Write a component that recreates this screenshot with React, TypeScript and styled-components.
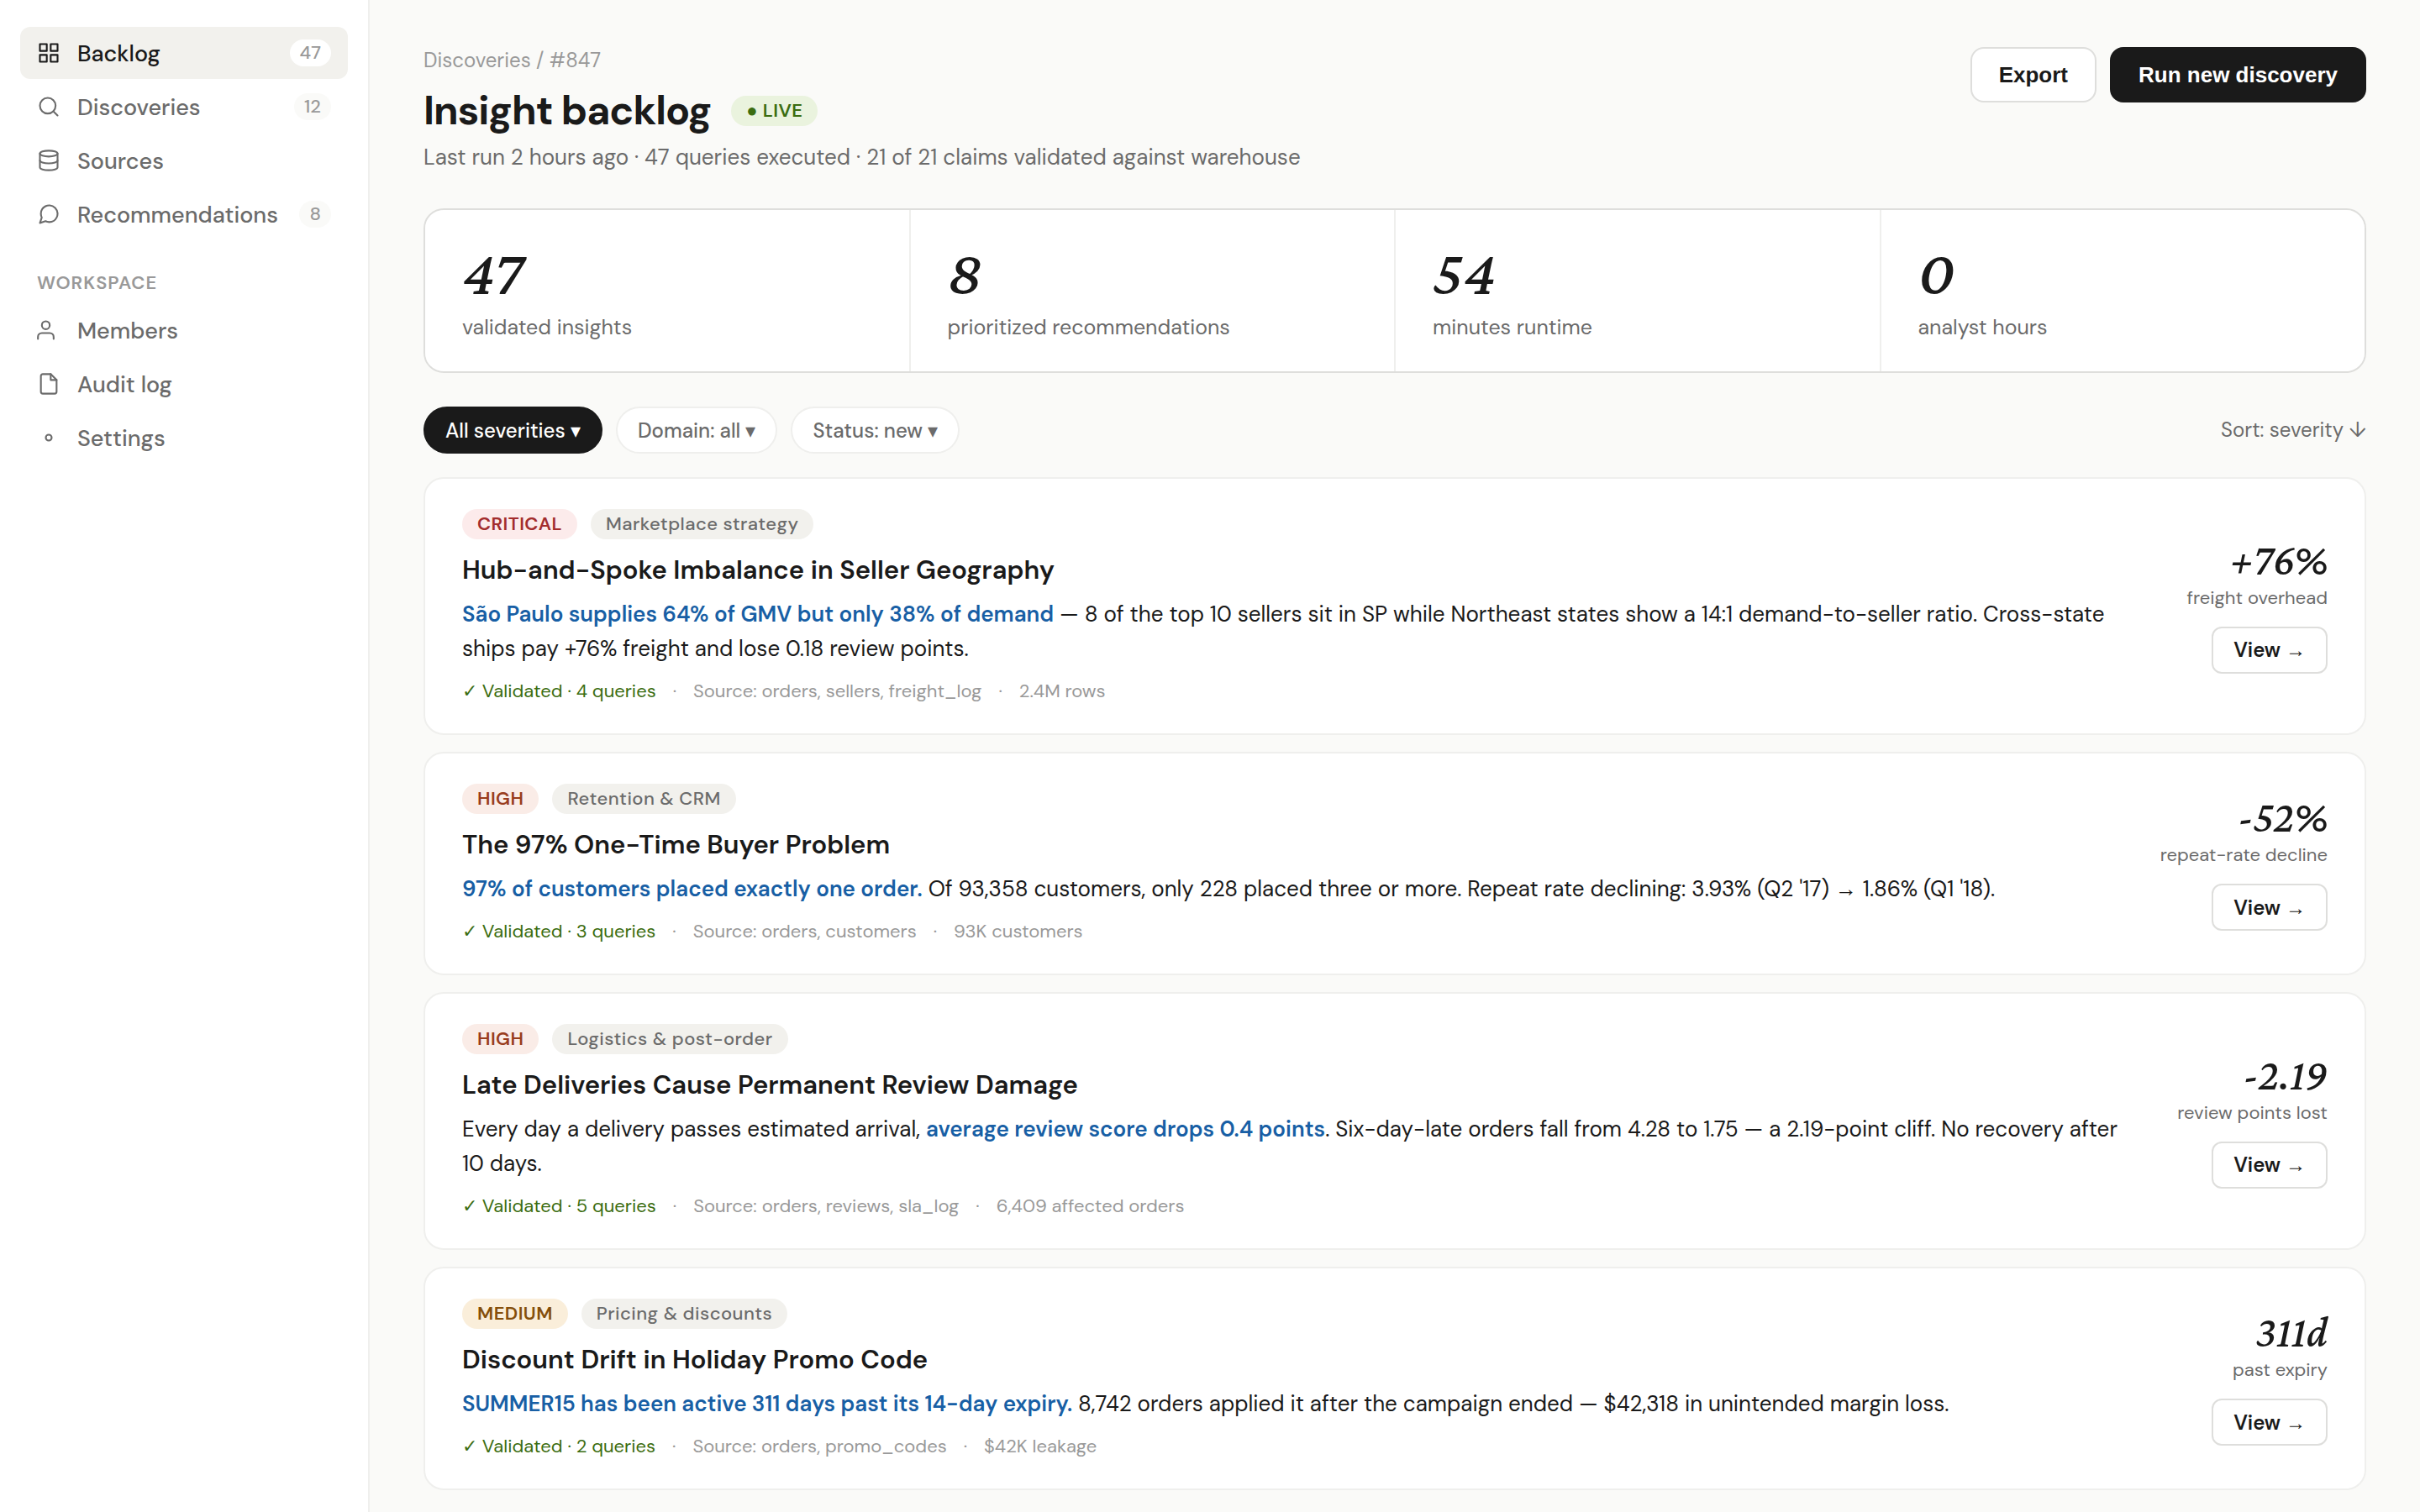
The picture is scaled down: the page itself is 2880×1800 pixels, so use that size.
import React from "react";
import styled, { createGlobalStyle } from "styled-components";

const sans = `"DM Sans", "Liberation Sans", sans-serif`;
const serif = `"Crimson Pro", "Liberation Serif", serif`;

const color = {
  page: "#fafaf8",
  surface: "#ffffff",
  muted: "#f2f1ed",
  ink: "#1a1a1a",
  text: "#6b6b6b",
  faint: "#999999",
  line: "#efefed",
  lineStrong: "#dededc",
  link: "#185fa5",
  green: "#3b6d11",
};

const GlobalStyle = createGlobalStyle`
  *, *::before, *::after { box-sizing: border-box; }
  body {
    margin: 0;
    background: ${color.page};
    color: ${color.ink};
    font-family: ${sans};
    font-size: 26px;
  }
  h1, h2, p, ul, dl, dd { margin: 0; padding: 0; }
  a { color: inherit; text-decoration: none; }
`;

const Shell = styled.div`
  display: flex;
  min-height: 100vh;
`;

const Sidebar = styled.nav`
  flex: none;
  width: 440px;
  padding: 32px 24px;
  background: ${color.surface};
  border-right: 2px solid ${color.line};
`;

const NavList = styled.ul`
  display: flex;
  flex-direction: column;
  gap: 2px;
  list-style: none;
`;

const NavLink = styled.a<{ $active?: boolean }>`
  display: flex;
  align-items: center;
  gap: 20px;
  height: 62px;
  padding: 0 20px;
  border-radius: 12px;
  font-size: 27px;
  font-weight: 500;
  color: ${(p) => (p.$active ? color.ink : color.text)};
  background: ${(p) => (p.$active ? color.muted : "transparent")};

  svg {
    flex: none;
    width: 28px;
    height: 28px;
  }
`;

const Count = styled.span<{ $active?: boolean }>`
  margin-left: auto;
  padding: 0 12px;
  border-radius: 16px;
  font-size: 22px;
  line-height: 32px;
  color: ${color.faint};
  background: ${(p) => (p.$active ? color.surface : color.page)};
`;

const NavHeading = styled.h2`
  padding: 37px 20px 11px;
  font-size: 22px;
  font-weight: 600;
  line-height: 28px;
  letter-spacing: 1px;
  color: ${color.faint};
`;

const Main = styled.main`
  flex: 1;
  min-width: 0;
  padding: 56px 64px 26px;
`;

const Header = styled.header`
  display: flex;
  justify-content: space-between;
  align-items: flex-start;
  margin-bottom: 44px;
`;

const Breadcrumb = styled.p`
  margin-bottom: 12px;
  font-size: 24px;
  line-height: 32px;
  color: ${color.faint};
`;

const TitleRow = styled.div`
  display: flex;
  align-items: center;
  gap: 24px;
  margin-bottom: 6px;
`;

const Title = styled.h1`
  font-size: 48px;
  font-weight: 700;
  line-height: 64px;
  letter-spacing: -1px;
`;

const Subtitle = styled.p`
  font-size: 26px;
  line-height: 34px;
  color: ${color.text};
`;

const Actions = styled.div`
  display: flex;
  gap: 16px;
`;

const ActionButton = styled.button<{ $primary?: boolean }>`
  padding: 16px 32px;
  border: 2px solid ${(p) => (p.$primary ? color.ink : color.lineStrong)};
  border-radius: 16px;
  font-family: "Liberation Sans", Arial, sans-serif;
  font-size: 26px;
  font-weight: 600;
  line-height: 30px;
  color: ${(p) => (p.$primary ? "#ffffff" : color.ink)};
  background: ${(p) => (p.$primary ? color.ink : color.surface)};
`;

type Tone = "live" | "critical" | "high" | "medium" | "neutral";

const tones: Record<Tone, { bg: string; fg: string }> = {
  live: { bg: "#eaf3de", fg: color.green },
  critical: { bg: "#fcebeb", fg: "#a32d2d" },
  high: { bg: "#faece7", fg: "#993c1d" },
  medium: { bg: "#faeeda", fg: "#854f0b" },
  neutral: { bg: color.muted, fg: color.text },
};

const Tag = styled.span<{ $tone: Tone }>`
  padding: 0 18px;
  border-radius: 18px;
  font-size: 22px;
  font-weight: ${(p) => (p.$tone === "neutral" ? 500 : 600)};
  line-height: 36px;
  letter-spacing: 0.02em;
  white-space: nowrap;
  color: ${(p) => tones[p.$tone].fg};
  background: ${(p) => tones[p.$tone].bg};
`;

const Stats = styled.dl`
  display: grid;
  grid-template-columns: repeat(4, 1fr);
  gap: 2px;
  margin-bottom: 40px;
  border: 2px solid ${color.lineStrong};
  border-radius: 24px;
  overflow: hidden;
  background: ${color.line};
`;

const Stat = styled.div`
  display: flex;
  flex-direction: column-reverse;
  gap: 16px;
  padding: 40px 44px 36px;
  background: ${color.surface};
`;

const StatValue = styled.dd`
  font-family: ${serif};
  font-size: 76px;
  font-style: italic;
  font-weight: 500;
  line-height: 68px;
`;

const StatLabel = styled.dt`
  font-size: 25px;
  line-height: 32px;
  color: ${color.text};
`;

const Toolbar = styled.div`
  display: flex;
  align-items: center;
  gap: 16px;
  margin-bottom: 28px;
`;

const Filter = styled.select<{ $active?: boolean }>`
  appearance: none;
  field-sizing: content;
  height: 56px;
  padding: 0 24px;
  border: 2px solid ${(p) => (p.$active ? color.ink : color.line)};
  border-radius: 28px;
  font-family: ${sans};
  font-size: 24px;
  font-weight: 500;
  color: ${(p) => (p.$active ? "#ffffff" : color.text)};
  background: ${(p) => (p.$active ? color.ink : color.surface)};
`;

const SortButton = styled.button`
  margin-left: auto;
  padding: 0;
  border: 0;
  background: none;
  font-family: ${sans};
  font-size: 24px;
  line-height: 32px;
  color: ${color.text};
`;

const CardList = styled.div`
  display: flex;
  flex-direction: column;
  gap: 20px;
`;

const Card = styled.article`
  display: flex;
  align-items: center;
  gap: 40px;
  padding: 36px 44px;
  border: 2px solid ${color.line};
  border-radius: 24px;
  background: ${color.surface};
`;

const CardBody = styled.div`
  flex: 1;
  min-width: 0;
`;

const Tags = styled.div`
  display: flex;
  gap: 16px;
  margin-bottom: 16px;
`;

const CardTitle = styled.h2`
  margin-bottom: 11px;
  font-size: 31px;
  font-weight: 600;
  line-height: 42px;
`;

const Summary = styled.p`
  margin-bottom: 16px;
  font-size: 26px;
  line-height: 41px;

  strong {
    font-weight: 600;
    color: ${color.link};
  }
`;

const Meta = styled.p`
  display: flex;
  gap: 20px;
  font-size: 22px;
  line-height: 28px;
  color: ${color.faint};
`;

const Validated = styled.span`
  color: ${color.green};
`;

const Arrow = styled.span`
  font-family: "Liberation Sans", sans-serif;
  line-height: 1;
`;

const Impact = styled.div`
  display: flex;
  flex: none;
  flex-direction: column;
  align-items: flex-end;
  width: 200px;
`;

const ImpactValue = styled.p`
  margin-bottom: 8px;
  font-family: ${serif};
  font-size: 52px;
  font-style: italic;
  font-weight: 500;
  line-height: 48px;
`;

const ImpactLabel = styled.p`
  margin-bottom: 20px;
  font-size: 22px;
  line-height: 28px;
  white-space: nowrap;
  color: ${color.text};
`;

const ViewButton = styled.button`
  height: 56px;
  padding: 0 24px;
  border: 2px solid ${color.lineStrong};
  border-radius: 12px;
  font-family: ${sans};
  font-size: 24px;
  font-weight: 600;
  color: ${color.ink};
  background: ${color.surface};
`;

function Icon({ children }: { children: React.ReactNode }) {
  return (
    <svg
      viewBox="0 0 24 24"
      fill="none"
      stroke="currentColor"
      strokeWidth="1.8"
      strokeLinecap="round"
      strokeLinejoin="round"
      aria-hidden="true"
    >
      {children}
    </svg>
  );
}

const icons = {
  grid: (
    <>
      <rect x="3" y="3" width="7" height="7" />
      <rect x="14" y="3" width="7" height="7" />
      <rect x="3" y="14" width="7" height="7" />
      <rect x="14" y="14" width="7" height="7" />
    </>
  ),
  search: (
    <>
      <circle cx="11" cy="11" r="8" />
      <path d="m21 21-4.35-4.35" />
    </>
  ),
  database: (
    <>
      <ellipse cx="12" cy="5" rx="9" ry="3" />
      <path d="M21 12c0 1.66-4 3-9 3s-9-1.34-9-3" />
      <path d="M3 5v14c0 1.66 4 3 9 3s9-1.34 9-3V5" />
    </>
  ),
  message: (
    <path d="M21 11.5a8.38 8.38 0 0 1-.9 3.8 8.5 8.5 0 0 1-7.6 4.7 8.38 8.38 0 0 1-3.8-.9L3 21l1.9-5.7a8.38 8.38 0 0 1-.9-3.8 8.5 8.5 0 0 1 4.7-7.6 8.38 8.38 0 0 1 3.8-.9h.5a8.48 8.48 0 0 1 8 8v.5z" />
  ),
  user: (
    <>
      <path d="M17 21v-2a4 4 0 0 0-4-4H5a4 4 0 0 0-4 4v2" />
      <circle cx="9" cy="7" r="4" />
    </>
  ),
  file: (
    <>
      <path d="M14 2H6a2 2 0 0 0-2 2v16a2 2 0 0 0 2 2h12a2 2 0 0 0 2-2V8z" />
      <path d="M14 2v6h6" />
    </>
  ),
  dot: <circle cx="12" cy="12" r="3" />,
};

type NavEntry = { label: string; icon: keyof typeof icons; count?: number; active?: boolean };

const primaryNav: NavEntry[] = [
  { label: "Backlog", icon: "grid", count: 47, active: true },
  { label: "Discoveries", icon: "search", count: 12 },
  { label: "Sources", icon: "database" },
  { label: "Recommendations", icon: "message", count: 8 },
];

const workspaceNav: NavEntry[] = [
  { label: "Members", icon: "user" },
  { label: "Audit log", icon: "file" },
  { label: "Settings", icon: "dot" },
];

const stats = [
  { value: "47", label: "validated insights" },
  { value: "8", label: "prioritized recommendations" },
  { value: "54", label: "minutes runtime" },
  { value: "0", label: "analyst hours" },
];

const filters = [
  { name: "Severity", value: "All severities ▾", active: true },
  { name: "Domain", value: "Domain: all ▾" },
  { name: "Status", value: "Status: new ▾" },
];

const insights: {
  tone: Tone;
  severity: string;
  domain: string;
  title: string;
  summary: React.ReactNode;
  queries: number;
  source: string;
  scope: string;
  impact: string;
  impactLabel: string;
}[] = [
  {
    tone: "critical",
    severity: "CRITICAL",
    domain: "Marketplace strategy",
    title: "Hub-and-Spoke Imbalance in Seller Geography",
    summary: (
      <>
        <strong>São Paulo supplies 64% of GMV but only 38% of demand</strong> — 8 of the top 10
        sellers sit in SP while Northeast states show a 14:1 demand-to-seller ratio. Cross-state
        ships pay +76% freight and lose 0.18 review points.
      </>
    ),
    queries: 4,
    source: "orders, sellers, freight_log",
    scope: "2.4M rows",
    impact: "+76%",
    impactLabel: "freight overhead",
  },
  {
    tone: "high",
    severity: "HIGH",
    domain: "Retention & CRM",
    title: "The 97% One-Time Buyer Problem",
    summary: (
      <>
        <strong>97% of customers placed exactly one order.</strong> Of 93,358 customers, only 228
        placed three or more. Repeat rate declining: 3.93% (Q2 '17) <Arrow>→</Arrow> 1.86% (Q1
        '18).
      </>
    ),
    queries: 3,
    source: "orders, customers",
    scope: "93K customers",
    impact: "-52%",
    impactLabel: "repeat-rate decline",
  },
  {
    tone: "high",
    severity: "HIGH",
    domain: "Logistics & post-order",
    title: "Late Deliveries Cause Permanent Review Damage",
    summary: (
      <>
        Every day a delivery passes estimated arrival,{" "}
        <strong>average review score drops 0.4 points</strong>. Six-day-late orders fall from 4.28
        to 1.75 — a 2.19-point cliff. No recovery after 10 days.
      </>
    ),
    queries: 5,
    source: "orders, reviews, sla_log",
    scope: "6,409 affected orders",
    impact: "-2.19",
    impactLabel: "review points lost",
  },
  {
    tone: "medium",
    severity: "MEDIUM",
    domain: "Pricing & discounts",
    title: "Discount Drift in Holiday Promo Code",
    summary: (
      <>
        <strong>SUMMER15 has been active 311 days past its 14-day expiry.</strong> 8,742 orders
        applied it after the campaign ended — $42,318 in unintended margin loss.
      </>
    ),
    queries: 2,
    source: "orders, promo_codes",
    scope: "$42K leakage",
    impact: "311d",
    impactLabel: "past expiry",
  },
];

function NavItems({ items }: { items: NavEntry[] }) {
  return (
    <NavList>
      {items.map((item) => (
        <li key={item.label}>
          <NavLink href="#" $active={item.active} aria-current={item.active ? "page" : undefined}>
            <Icon>{icons[item.icon]}</Icon>
            {item.label}
            {item.count !== undefined && <Count $active={item.active}>{item.count}</Count>}
          </NavLink>
        </li>
      ))}
    </NavList>
  );
}

export default function App() {
  return (
    <>
      <GlobalStyle />
      <Shell>
        <Sidebar aria-label="Primary">
          <NavItems items={primaryNav} />
          <NavHeading>WORKSPACE</NavHeading>
          <NavItems items={workspaceNav} />
        </Sidebar>
        <Main>
          <Header>
            <div>
              <Breadcrumb>
                <a href="#">Discoveries</a> / #847
              </Breadcrumb>
              <TitleRow>
                <Title>Insight backlog</Title>
                <Tag $tone="live">● LIVE</Tag>
              </TitleRow>
              <Subtitle>
                Last run 2 hours ago · 47 queries executed · 21 of 21 claims validated against
                warehouse
              </Subtitle>
            </div>
            <Actions>
              <ActionButton type="button">Export</ActionButton>
              <ActionButton type="button" $primary>
                Run new discovery
              </ActionButton>
            </Actions>
          </Header>

          <Stats>
            {stats.map((s) => (
              <Stat key={s.label}>
                <StatLabel>{s.label}</StatLabel>
                <StatValue>{s.value}</StatValue>
              </Stat>
            ))}
          </Stats>

          <Toolbar>
            {filters.map((f) => (
              <Filter key={f.name} aria-label={f.name} $active={f.active}>
                <option>{f.value}</option>
              </Filter>
            ))}
            <SortButton type="button">Sort: severity ↓</SortButton>
          </Toolbar>

          <CardList>
            {insights.map((item) => (
              <Card key={item.title}>
                <CardBody>
                  <Tags>
                    <Tag $tone={item.tone}>{item.severity}</Tag>
                    <Tag $tone="neutral">{item.domain}</Tag>
                  </Tags>
                  <CardTitle>{item.title}</CardTitle>
                  <Summary>{item.summary}</Summary>
                  <Meta>
                    <Validated>✓ Validated · {item.queries} queries</Validated>
                    <span>·</span>
                    <span>Source: {item.source}</span>
                    <span>·</span>
                    <span>{item.scope}</span>
                  </Meta>
                </CardBody>
                <Impact>
                  <ImpactValue>{item.impact}</ImpactValue>
                  <ImpactLabel>{item.impactLabel}</ImpactLabel>
                  <ViewButton type="button">
                    View <Arrow>→</Arrow>
                  </ViewButton>
                </Impact>
              </Card>
            ))}
          </CardList>
        </Main>
      </Shell>
    </>
  );
}
